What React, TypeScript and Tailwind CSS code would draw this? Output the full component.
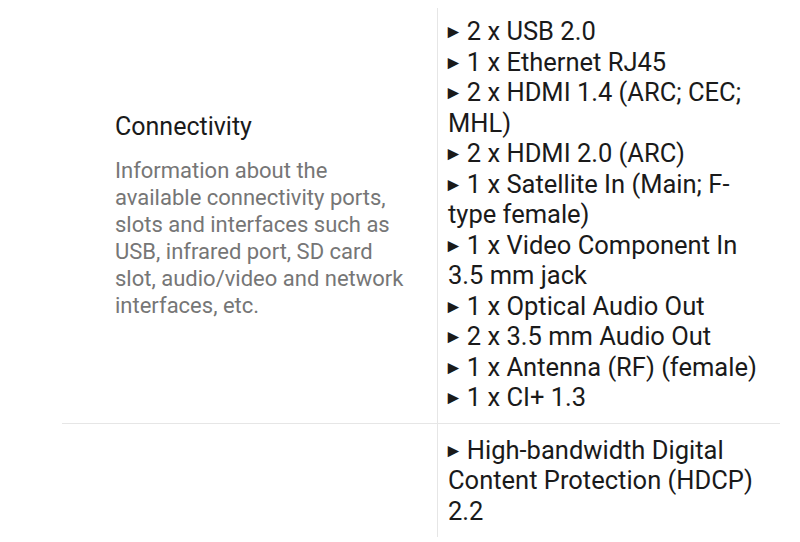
import React from 'react';

const ports = [
  '2 x USB 2.0',
  '1 x Ethernet RJ45',
  '2 x HDMI 1.4 (ARC; CEC; MHL)',
  '2 x HDMI 2.0 (ARC)',
  '1 x Satellite In (Main; F-type female)',
  '1 x Video Component In 3.5 mm jack',
  '1 x Optical Audio Out',
  '2 x 3.5 mm Audio Out',
  '1 x Antenna (RF) (female)',
  '1 x CI+ 1.3',
];

const Bullet: React.FC<{ text: string }> = ({ text }) => (
  <div>
    <span className="-ml-[4px] mr-[4px] inline-block align-[2px] text-[19px] leading-none">►</span>
    {text}
  </div>
);

export default function App() {
  return (
    <div className="min-h-[542px] bg-white font-['Roboto',sans-serif]">
      <div className="ml-[62px] grid w-[718px] grid-cols-[375px_343px] pt-[8px]">
        <div className="flex flex-col justify-center border-b border-[#e6e6e6] pl-[53px] pr-[20px]">
          <h3 className="text-[25px] leading-[30px] text-[#1a1a1a]">Connectivity</h3>
          <p className="mt-[15px] text-[22px] leading-[27px] text-[#767676]">
            Information about the available connectivity ports, slots and interfaces such as USB, infrared port, SD card slot, audio/video and network interfaces, etc.
          </p>
        </div>
        <div className="border-b border-l border-[#e6e6e6] pb-[10px] pl-[10px] pr-[22px] pt-[8px] text-[25.5px] leading-[30.5px] text-[#1a1a1a]">
          {ports.map((p) => (
            <Bullet key={p} text={p} />
          ))}
        </div>
        <div className="h-[113px]" />
        <div className="border-l border-[#e6e6e6] pl-[10px] pr-[22px] pt-[11px] text-[25.5px] leading-[30.5px] text-[#1a1a1a]">
          <Bullet text="High-bandwidth Digital Content Protection (HDCP) 2.2" />
        </div>
      </div>
    </div>
  );
}
